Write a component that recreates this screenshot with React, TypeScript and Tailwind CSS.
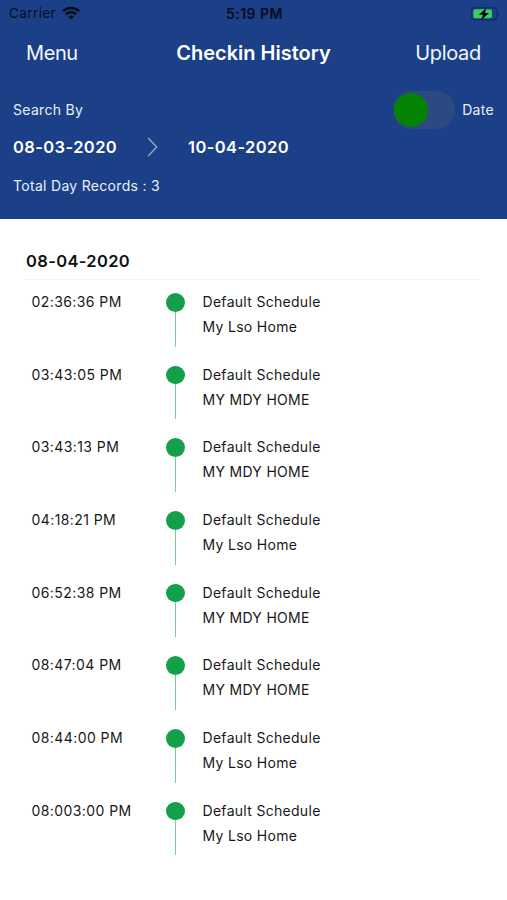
import React from 'react';

interface Checkin {
  time: string;
  place: string;
}

const checkins: Checkin[] = [
  { time: '02:36:36 PM', place: 'My Lso Home' },
  { time: '03:43:05 PM', place: 'MY MDY HOME' },
  { time: '03:43:13 PM', place: 'MY MDY HOME' },
  { time: '04:18:21 PM', place: 'My Lso Home' },
  { time: '06:52:38 PM', place: 'MY MDY HOME' },
  { time: '08:47:04 PM', place: 'MY MDY HOME' },
  { time: '08:44:00 PM', place: 'My Lso Home' },
  { time: '08:003:00 PM', place: 'My Lso Home' },
];

const StatusBar: React.FC = () => (
  <div className="grid h-[27px] grid-cols-3 items-center pl-[9px] pr-[7px] text-[13.5px] leading-[27px] text-[#060c1c]">
    <div className="flex items-center gap-[6px]">
      <span className="tracking-[0.4px]">Carrier</span>
      <svg className="mb-[2px] h-[14px] w-[18px]" viewBox="0 0 18 14" fill="none" stroke="currentColor" strokeWidth="2.5">
        <path d="M1 5.2a11.3 11.3 0 0 1 16 0" />
        <path d="M4 8.4a7.1 7.1 0 0 1 10 0" />
        <path d="M9 13.6 6.2 10.8a4 4 0 0 1 5.6 0Z" fill="currentColor" stroke="none" />
      </svg>
    </div>
    <span className="text-center text-[14px] font-semibold tracking-[0.5px]">5:19 PM</span>
    <svg className="h-[14px] w-[29px] justify-self-end" viewBox="0 0 29 14">
      <rect x="0.7" y="0.7" width="25" height="12.2" rx="3.4" fill="none" stroke="#102a62" strokeWidth="1.1" />
      <rect x="2.3" y="2.3" width="18.7" height="9" rx="2" fill="#3ecb60" />
      <path d="M27 4.7v4.6c1.8-.8 1.8-3.8 0-4.6Z" fill="#102a62" />
      <path d="M15.3 1 7.8 7.7h4L10.3 13l7.8-6.9h-4Z" fill="#060c1c" />
    </svg>
  </div>
);

const NavBar: React.FC = () => (
  <nav className="grid h-[52px] grid-cols-[1fr_auto_1fr] items-center border-b border-[#193b7d] px-[26px] text-[20px] text-[#f3f6fc]">
    <button className="justify-self-start tracking-[-0.4px]">Menu</button>
    <h1 className="text-[20px] font-semibold text-white">Checkin History</h1>
    <button className="justify-self-end tracking-[-0.3px]">Upload</button>
  </nav>
);

const SearchPanel: React.FC = () => (
  <section className="h-[140px] pl-[13px] pr-[13px] pt-[12px] text-[14px] text-[#e8eefa]">
    <div className="flex h-[38px] items-center justify-between">
      <span className="pb-[2px] tracking-[0.3px]">Search By</span>
      <div className="flex items-center gap-[7px]">
        <div className="flex h-[38px] w-[62px] items-center rounded-full bg-[#2c4981] pl-[1px]">
          <div className="h-[34px] w-[34px] rounded-full bg-[#038203]" />
        </div>
        <span className="pb-[2px] tracking-[0.3px]">Date</span>
      </div>
    </div>
    <div className="flex h-[36px] items-center text-[16.5px] font-semibold tracking-[0.4px] text-white">
      <span className="w-[134px]">08-03-2020</span>
      <svg className="h-[20px] w-[41px]" viewBox="0 0 41 20" fill="none" stroke="#98a6c4" strokeWidth="1.4">
        <path d="m1.2 1 8.5 9-8.5 9" />
      </svg>
      <span>10-04-2020</span>
    </div>
    <p className="mt-[10px] leading-[22px] tracking-[0.3px]">Total Day Records : 3</p>
  </section>
);

const CheckinRow: React.FC<Checkin> = ({ time, place }) => (
  <li className="flex h-[72.7px] text-[14px] leading-[25px] tracking-[0.3px] text-[#181818]">
    <span className="w-[134.5px] tracking-[0.42px]">{time}</span>
    <div className="flex w-[36.5px] flex-col items-start pt-[4px]">
      <div className="h-[18.5px] w-[18.5px] rounded-full bg-[#14a04a]" />
      <div className="ml-[9px] h-[35px] w-px bg-[#72cf9b]" />
    </div>
    <div>
      <p>Default Schedule</p>
      <p>{place}</p>
    </div>
  </li>
);

const App: React.FC = () => {
  return (
    <div className="h-[900px] w-[507px] overflow-hidden bg-white font-['Inter',sans-serif]">
      <header className="bg-[#1c4087]">
        <StatusBar />
        <NavBar />
        <SearchPanel />
      </header>
      <main className="pl-[26px] pr-[27px] pt-[30px]">
        <h2 className="h-[31px] border-b border-[#f3f3f3] text-[16.5px] font-semibold leading-[24px] tracking-[0.35px] text-[#111]">
          08-04-2020
        </h2>
        <ul className="pl-[5.5px] pt-[9px]">
          {checkins.map((checkin) => (
            <CheckinRow key={checkin.time} {...checkin} />
          ))}
        </ul>
      </main>
    </div>
  );
};

export default App;
